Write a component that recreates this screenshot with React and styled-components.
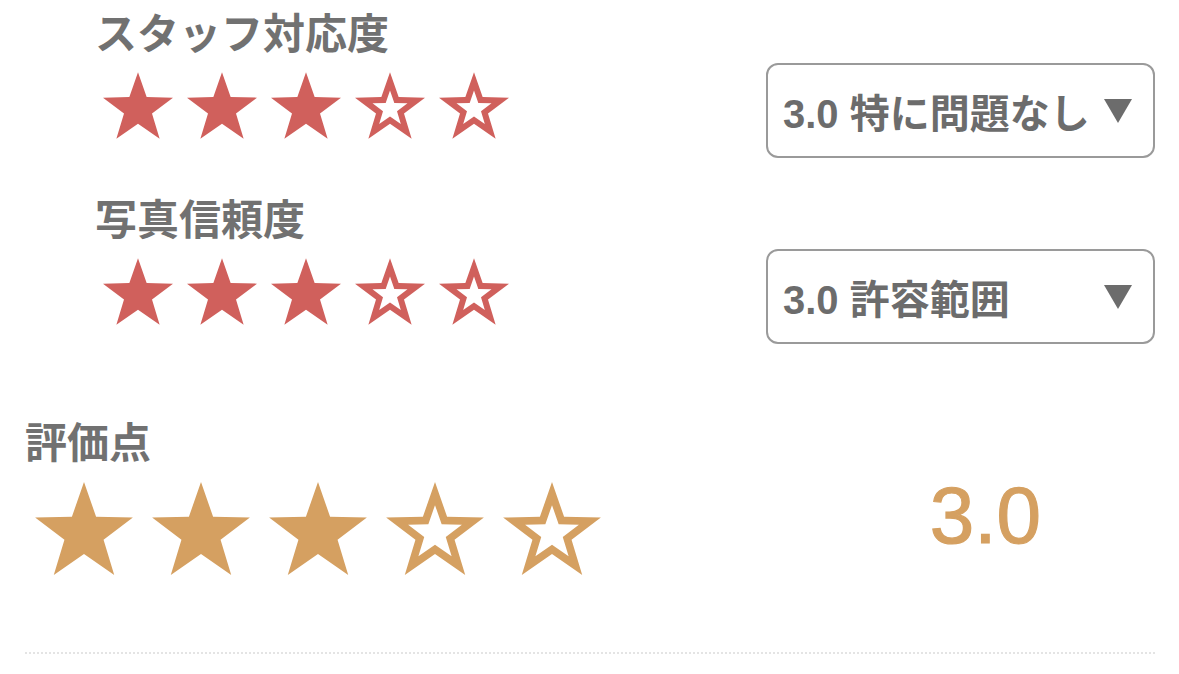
import React from "react";
import styled, { createGlobalStyle } from "styled-components";

const GlobalStyle = createGlobalStyle`
  html, body {
    margin: 0;
    padding: 0;
    background: #ffffff;
  }
  body {
    font-family: "Liberation Sans", "Noto Sans CJK JP", sans-serif;
  }
`;

const RED = "#d0605c";
const GOLD = "#d5a061";
const GRAY = "#717171";

// regular five point star, center (50,50), R=50, r=20
const POINTS = [
  [50, 0],
  [61.76, 33.82],
  [97.55, 34.55],
  [69.02, 56.18],
  [79.39, 90.45],
  [50, 70],
  [20.61, 90.45],
  [30.98, 56.18],
  [2.45, 34.55],
  [38.24, 33.82],
];

const starPath = (s) =>
  "M" +
  POINTS.map(([x, y]) => `${(50 + (x - 50) * s).toFixed(2)} ${(50 + (y - 50) * s).toFixed(2)}`).join(" L") +
  " Z";

const Star = ({ filled, color, size, hole }) => (
  <StarSvg $size={size} viewBox="2.45 0 95.1 90.45">
    <path
      d={filled ? starPath(1) : starPath(1) + " " + starPath(hole)}
      fill={color}
      fillRule="evenodd"
    />
  </StarSvg>
);

const Rating = ({ value, color, size, gap, hole }) => (
  <Stars $gap={gap}>
    {[1, 2, 3, 4, 5].map((n) => (
      <Star key={n} filled={n <= value} color={color} size={size} hole={hole} />
    ))}
  </Stars>
);

const criteria = [
  { label: "スタッフ対応度", value: 3, option: "3.0 特に問題なし" },
  { label: "写真信頼度", value: 3, option: "3.0 許容範囲" },
];

export default function App() {
  return (
    <Page>
      <GlobalStyle />
      {criteria.map((c) => (
        <Criterion key={c.label}>
          <Left>
            <Label>{c.label}</Label>
            <StarsWrap>
              <Rating value={c.value} color={RED} size={70} gap={14} hole={0.5} />
            </StarsWrap>
          </Left>
          <SelectBox>
            <SelectText>{c.option}</SelectText>
            <Caret />
          </SelectBox>
        </Criterion>
      ))}
      <Total>
        <Label>評価点</Label>
        <TotalRow>
          <BigStarsWrap>
            <Rating value={3} color={GOLD} size={98} gap={19} hole={0.55} />
          </BigStarsWrap>
          <Score>3.0</Score>
        </TotalRow>
      </Total>
      <Divider />
    </Page>
  );
}

const Page = styled.div`
  width: 1179px;
  box-sizing: border-box;
  padding: 10px 24px 0 25px;
  display: flex;
  flex-direction: column;
`;

const Criterion = styled.div`
  display: flex;
  justify-content: space-between;
  align-items: flex-start;
  padding-left: 70px;
  height: 186px;
`;

const Left = styled.div`
  display: flex;
  flex-direction: column;
`;

const Label = styled.div`
  font-family: "Noto Sans CJK JP", sans-serif;
  font-weight: 700;
  font-size: 42px;
  line-height: 42px;
  color: ${GRAY};
  white-space: nowrap;
`;

const StarsWrap = styled.div`
  margin: 20px 0 0 8px;
`;

const Stars = styled.div`
  display: flex;
  gap: ${(p) => p.$gap}px;
`;

const StarSvg = styled.svg`
  display: block;
  width: ${(p) => p.$size}px;
  height: ${(p) => Math.round(p.$size * 0.951)}px;
`;

const SelectBox = styled.div`
  margin-top: 53px;
  width: 389px;
  height: 95px;
  box-sizing: border-box;
  border: 2px solid #9a9a9a;
  border-radius: 12px;
  display: flex;
  align-items: center;
  justify-content: space-between;
  padding: 0 21px 0 15px;
`;

const SelectText = styled.span`
  font-family: "Liberation Sans", "Noto Sans CJK JP", sans-serif;
  font-weight: 700;
  font-size: 40px;
  color: #6c6c6c;
  white-space: nowrap;
`;

const Caret = styled.span`
  width: 0;
  height: 0;
  border-left: 14px solid transparent;
  border-right: 14px solid transparent;
  border-top: 24px solid #6c6c6c;
`;

const Total = styled.div`
  margin-top: 37px;
  display: flex;
  flex-direction: column;
`;

const TotalRow = styled.div`
  display: flex;
  align-items: flex-start;
  justify-content: space-between;
  margin-top: 15px;
`;

const BigStarsWrap = styled.div`
  margin: 6px 0 0 10px;
`;

const Score = styled.div`
  font-family: "Liberation Sans", sans-serif;
  font-size: 80px;
  line-height: 80px;
  color: ${GOLD};
  -webkit-text-stroke: 1.2px ${GOLD};
  margin-right: 114px;
`;

const Divider = styled.div`
  margin-top: 77px;
  border-top: 2px dotted #e4e4e4;
`;
